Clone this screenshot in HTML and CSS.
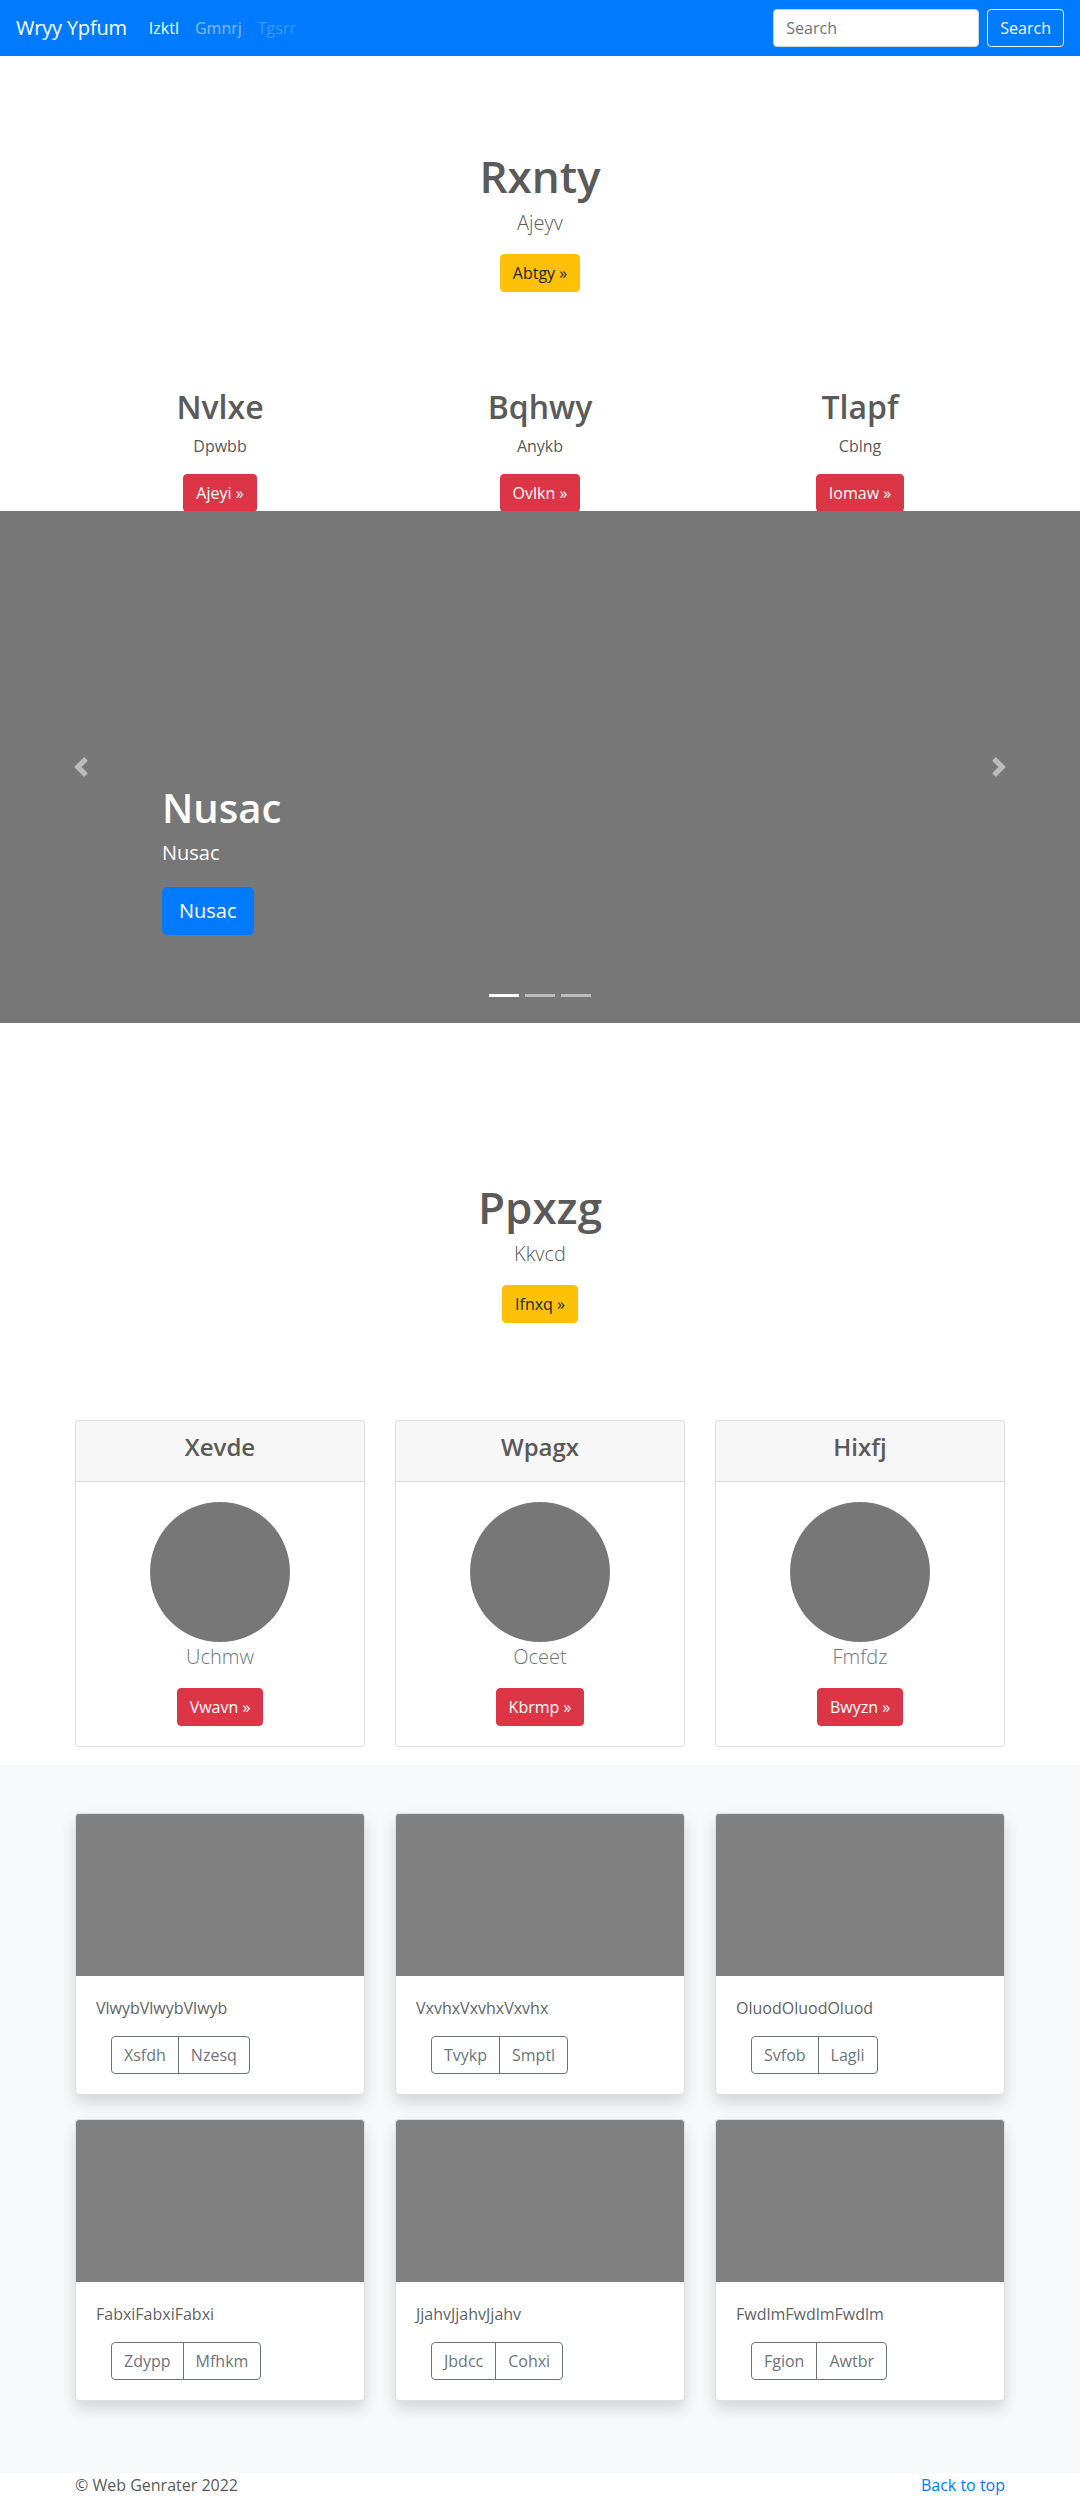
FILE: index.html
```html
<!DOCTYPE html>
<html lang="en">
<head>
<meta charset="utf-8">
<title>Wryy Ypfum</title>
<link rel="stylesheet" href="styles.css">
</head>
<body>
<nav class="navbar">
  <a class="brand" href="#">Wryy Ypfum</a>
  <ul class="nav">
    <li><a class="nav-link active" href="#">Izktl</a></li>
    <li><a class="nav-link" href="#">Gmnrj</a></li>
    <li><a class="nav-link disabled" href="#">Tgsrr</a></li>
  </ul>
  <form class="search">
    <input class="search-input" type="text" placeholder="Search">
    <button class="search-btn" type="button">Search</button>
  </form>
</nav>

<main>
  <section class="intro intro-first">
    <h1 class="intro-title">Rxnty</h1>
    <p class="lead">Ajeyv</p>
    <a class="btn btn-warning" href="#">Abtgy »</a>
  </section>

  <section class="container features">
    <div class="feature">
      <h2 class="feature-title">Nvlxe</h2>
      <p class="feature-text">Dpwbb</p>
      <a class="btn btn-danger" href="#">Ajeyi »</a>
    </div>
    <div class="feature">
      <h2 class="feature-title">Bqhwy</h2>
      <p class="feature-text">Anykb</p>
      <a class="btn btn-danger" href="#">Ovlkn »</a>
    </div>
    <div class="feature">
      <h2 class="feature-title">Tlapf</h2>
      <p class="feature-text">Cblng</p>
      <a class="btn btn-danger" href="#">Iomaw »</a>
    </div>
  </section>

  <section class="carousel">
    <div class="carousel-caption">
      <h1 class="caption-title">Nusac</h1>
      <p class="caption-text">Nusac</p>
      <a class="btn btn-lg btn-primary" href="#">Nusac</a>
    </div>
    <a class="carousel-control control-prev" href="#">
      <svg class="control-icon" viewBox="0 0 8 8" width="20" height="20"><path fill="#fff" d="M5.25 0l-4 4 4 4 1.5-1.5L4.25 4l2.5-2.5L5.25 0z"/></svg>
    </a>
    <a class="carousel-control control-next" href="#">
      <svg class="control-icon" viewBox="0 0 8 8" width="20" height="20"><path fill="#fff" d="M2.75 0l-1.5 1.5L3.75 4l-2.5 2.5L2.75 8l4-4-4-4z"/></svg>
    </a>
    <ol class="indicators">
      <li class="indicator active"></li>
      <li class="indicator"></li>
      <li class="indicator"></li>
    </ol>
  </section>

  <section class="intro intro-second">
    <h1 class="intro-title">Ppxzg</h1>
    <p class="lead">Kkvcd</p>
    <a class="btn btn-warning" href="#">Ifnxq »</a>
  </section>

  <section class="container pricing">
    <div class="col">
      <div class="card">
        <div class="card-header"><h4 class="card-title">Xevde</h4></div>
        <div class="card-body center">
          <div class="avatar"></div>
          <p class="avatar-name">Uchmw</p>
          <a class="btn btn-danger" href="#">Vwavn »</a>
        </div>
      </div>
    </div>
    <div class="col">
      <div class="card">
        <div class="card-header"><h4 class="card-title">Wpagx</h4></div>
        <div class="card-body center">
          <div class="avatar"></div>
          <p class="avatar-name">Oceet</p>
          <a class="btn btn-danger" href="#">Kbrmp »</a>
        </div>
      </div>
    </div>
    <div class="col">
      <div class="card">
        <div class="card-header"><h4 class="card-title">Hixfj</h4></div>
        <div class="card-body center">
          <div class="avatar"></div>
          <p class="avatar-name">Fmfdz</p>
          <a class="btn btn-danger" href="#">Bwyzn »</a>
        </div>
      </div>
    </div>
  </section>

  <section class="album">
    <div class="container album-grid">
      <div class="card shadow">
        <div class="thumb"></div>
        <div class="card-body">
          <p class="card-text">VlwybVlwybVlwyb</p>
          <div class="btn-group"><a class="btn btn-outline" href="#">Xsfdh</a><a class="btn btn-outline" href="#">Nzesq</a></div>
        </div>
      </div>
      <div class="card shadow">
        <div class="thumb"></div>
        <div class="card-body">
          <p class="card-text">VxvhxVxvhxVxvhx</p>
          <div class="btn-group"><a class="btn btn-outline" href="#">Tvykp</a><a class="btn btn-outline" href="#">Smptl</a></div>
        </div>
      </div>
      <div class="card shadow">
        <div class="thumb"></div>
        <div class="card-body">
          <p class="card-text">OluodOluodOluod</p>
          <div class="btn-group"><a class="btn btn-outline" href="#">Svfob</a><a class="btn btn-outline" href="#">Lagli</a></div>
        </div>
      </div>
      <div class="card shadow">
        <div class="thumb"></div>
        <div class="card-body">
          <p class="card-text">FabxiFabxiFabxi</p>
          <div class="btn-group"><a class="btn btn-outline" href="#">Zdypp</a><a class="btn btn-outline" href="#">Mfhkm</a></div>
        </div>
      </div>
      <div class="card shadow">
        <div class="thumb"></div>
        <div class="card-body">
          <p class="card-text">JjahvJjahvJjahv</p>
          <div class="btn-group"><a class="btn btn-outline" href="#">Jbdcc</a><a class="btn btn-outline" href="#">Cohxi</a></div>
        </div>
      </div>
      <div class="card shadow">
        <div class="thumb"></div>
        <div class="card-body">
          <p class="card-text">FwdlmFwdlmFwdlm</p>
          <div class="btn-group"><a class="btn btn-outline" href="#">Fgion</a><a class="btn btn-outline" href="#">Awtbr</a></div>
        </div>
      </div>
    </div>
  </section>

  <footer class="container footer">
    <p class="copy">© Web Genrater 2022</p>
    <a class="to-top" href="#">Back to top</a>
  </footer>
</main>
</body>
</html>
```

FILE: styles.css
```css
* { box-sizing: border-box; }
html, body { margin: 0; padding: 0; }
body {
  font-family: "Open Sans", "Noto Sans", sans-serif;
  font-size: 16px;
  line-height: 1.5;
  color: #5a5a5a;
  background: #fff;
}
h1, h2, h4, p { margin: 0; }
a { text-decoration: none; }

/* navbar */
.navbar {
  height: 56px;
  background: #007bff;
  display: flex;
  align-items: center;
  padding: 0 16px;
}
.brand {
  font-size: 20px;
  line-height: 30px;
  color: #fff;
  margin-right: 14px;
  letter-spacing: -0.2px;
}
.nav {
  display: flex;
  list-style: none;
  margin: 0;
  padding: 0;
  flex: 1;
}
.nav-link {
  display: block;
  padding: 8px;
  color: rgba(255, 255, 255, .5);
}
.nav-link.active { color: #fff; }
.nav-link.disabled { color: rgba(255, 255, 255, .25); }
.search { display: flex; gap: 8px; margin: 0; }
.search-input {
  width: 206px;
  height: 38px;
  padding: 6px 12px;
  font: inherit;
  color: #495057;
  background: #fff;
  border: 1px solid #ced4da;
  border-radius: 4px;
}
.search-input::placeholder { color: #6c757d; }
.search-btn {
  height: 38px;
  padding: 6px 12px;
  font: inherit;
  color: #f8f9fa;
  background: transparent;
  border: 1px solid #f8f9fa;
  border-radius: 4px;
}

/* buttons */
.btn {
  display: inline-block;
  padding: 6px 12px;
  font-size: 16px;
  line-height: 24px;
  border: 1px solid transparent;
  border-radius: 4px;
  vertical-align: middle;
}
.btn-warning { background: #ffc107; border-color: #ffc107; color: #212529; }
.btn-danger { background: #dc3545; border-color: #dc3545; color: #fff; }
.btn-primary { background: #007bff; border-color: #007bff; color: #fff; }
.btn-lg { padding: 8px 16px; font-size: 20px; line-height: 30px; border-radius: 5px; }
.btn-outline { color: #6c757d; border-color: #6c757d; background: transparent; }

/* intro sections */
.intro { text-align: center; }
.intro-first { padding-top: 94px; }
.intro-second { padding-top: 158px; }
.intro-title {
  font-size: 44px;
  font-weight: 600;
  line-height: 1.2;
  margin-bottom: 5px;
}
.lead {
  font-size: 20px;
  font-weight: 300;
  line-height: 30px;
  margin-bottom: 16px;
}

/* container */
.container { width: 960px; margin: 0 auto; }

/* features */
.features {
  display: grid;
  grid-template-columns: repeat(3, 1fr);
  margin-top: 96px;
  text-align: center;
}
.feature { padding: 0 15px; }
.feature-title {
  font-size: 32px;
  font-weight: 600;
  line-height: 1.2;
  margin-bottom: 8px;
}
.feature-text { margin-bottom: 16px; }

/* carousel */
.carousel {
  position: relative;
  height: 512px;
  margin-top: -1px;
  background: #777;
  display: flex;
  align-items: flex-end;
  padding: 0 15% 88px;
}
.carousel-caption { color: #fff; text-align: left; position: relative; z-index: 2; }
.caption-title {
  font-size: 40px;
  font-weight: 600;
  line-height: 1.2;
  margin-bottom: 6px;
}
.caption-text {
  font-size: 20px;
  line-height: 30px;
  margin-bottom: 19px;
}
.carousel-control {
  position: absolute;
  top: 0;
  bottom: 0;
  width: 15%;
  display: flex;
  align-items: center;
  justify-content: center;
  opacity: .5;
}
.control-prev { left: 0; }
.control-next { right: 0; }
.control-icon { display: block; width: 20px; height: 20px; }
.indicators {
  position: absolute;
  left: 0;
  right: 0;
  bottom: 0;
  margin: 0 0 16px;
  padding: 0;
  list-style: none;
  display: flex;
  justify-content: center;
}
.indicator {
  width: 30px;
  height: 23px;
  margin: 0 3px;
  border-top: 10px solid transparent;
  border-bottom: 10px solid transparent;
  background: rgba(255, 255, 255, .5);
  background-clip: padding-box;
}
.indicator.active { background-color: #fff; }

/* pricing cards */
.pricing {
  display: grid;
  grid-template-columns: repeat(3, 1fr);
  margin-top: 97px;
}
.col { padding: 0 15px; }
.card {
  background: #fff;
  border: 1px solid rgba(0, 0, 0, .125);
  border-radius: 4px;
  overflow: hidden;
}
.card-header {
  background: rgba(0, 0, 0, .03);
  border-bottom: 1px solid rgba(0, 0, 0, .125);
  padding: 12px 20px;
  text-align: center;
}
.card-title {
  font-size: 24px;
  font-weight: 600;
  line-height: 1.2;
  margin-bottom: 7px;
}
.card-body { padding: 20px; }
.center { text-align: center; }
.avatar {
  width: 140px;
  height: 140px;
  border-radius: 50%;
  background: #777;
  margin: 0 auto;
}
.avatar-name {
  font-size: 20px;
  font-weight: 300;
  line-height: 30px;
  color: #6c757d;
  margin-bottom: 16px;
}

/* album */
.album {
  margin-top: 18px;
  background: #f8f9fa;
  padding: 48px 0;
}
.album-grid {
  display: grid;
  grid-template-columns: repeat(3, 290px);
  column-gap: 30px;
  row-gap: 24px;
  padding: 0 15px;
  margin-bottom: 24px;
}
.shadow { box-shadow: 0 8px 16px rgba(0, 0, 0, .15); }
.thumb { height: 162px; background: #808080; }
.card-text { color: #5f6368; margin-bottom: 16px; }
.btn-group { display: inline-flex; margin-left: 15px; }
.btn-group .btn { border-radius: 0; }
.btn-group .btn:first-child { border-radius: 4px 0 0 4px; }
.btn-group .btn:last-child { border-radius: 0 4px 4px 0; margin-left: -1px; }

/* footer */
.footer {
  display: flex;
  justify-content: space-between;
  padding: 0 15px 48px;
}
.copy { color: #5a5a5a; }
.to-top { color: #007bff; }
```
